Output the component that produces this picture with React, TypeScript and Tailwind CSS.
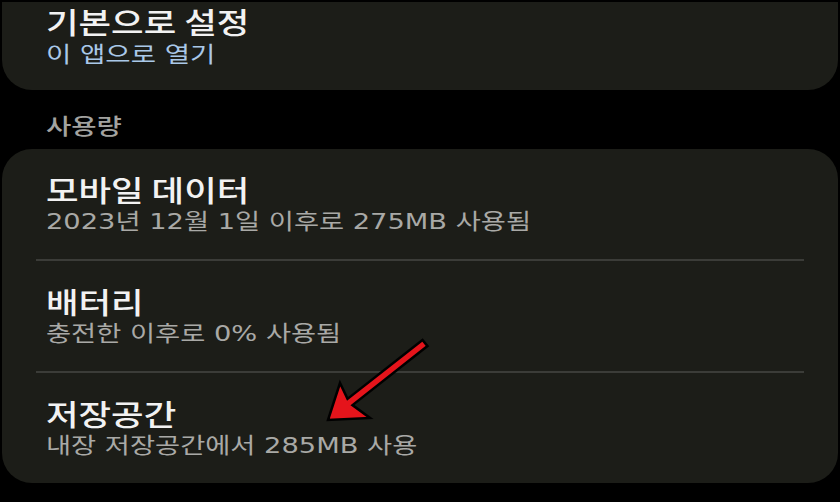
import React from "react";

const font = { fontFamily: '"Noto Sans CJK KR", "Noto Sans", sans-serif' };
const subFont = { fontFamily: '"DejaVu Sans", "Noto Sans CJK KR", sans-serif' };

function Row({ title, sub, last }: { title: string; sub: string; last?: boolean }) {
  return (
    <div className="flex flex-col">
      <div className="h-[110px] pl-[44px] pt-[23px]">
        <div className="origin-left scale-x-[1.22] text-[29px] leading-[34px] font-medium text-[#f2f2f2] whitespace-nowrap">{title}</div>
        <div className="mt-[1px] origin-left scale-x-[1.24] text-[22px] leading-[30px] text-[#a9a9a6] whitespace-nowrap" style={subFont}>
          {sub}
        </div>
      </div>
      {!last && <div className="mx-[34px] h-[2px] bg-[#3b3c38]" />}
    </div>
  );
}

export default function App() {
  return (
    <div className="relative w-[840px] h-[502px] bg-black p-[2px] flex flex-col overflow-hidden" style={font}>
      <div className="h-[88px] bg-[#1c1d18] rounded-b-[30px] pl-[44px] pt-[3px]">
        <div className="origin-left scale-x-[1.22] text-[29px] leading-[32px] font-medium text-[#f2f2f2] whitespace-nowrap">기본으로 설정</div>
        <div className="mt-[3px] origin-left scale-x-[1.25] text-[22px] leading-[30px] text-[#a9c8e8] whitespace-nowrap" style={subFont}>
          이 앱으로 열기
        </div>
      </div>
      <div className="pl-[44px] pt-[20px] h-[59px]">
        <div className="origin-left scale-x-[1.25] text-[22px] leading-[28px] font-medium text-[#a3a3a0] whitespace-nowrap">사용량</div>
      </div>
      <div className="flex-1 mb-[17px] bg-[#1c1d18] rounded-[30px] flex flex-col">
        <Row title="모바일 데이터" sub="2023년 12월 1일 이후로 275MB 사용됨" />
        <Row title="배터리" sub="충전한 이후로 0% 사용됨" />
        <Row title="저장공간" sub="내장 저장공간에서 285MB 사용" last />
      </div>
      <svg className="absolute left-0 top-0 pointer-events-none" width="840" height="502" viewBox="0 0 840 502">
        <polygon
          points="422.5,339.9 347.5,398.9 340,383 328,420 370,418 352.5,405.1 427.5,346.1"
          fill="#e5141b"
          stroke="#000"
          strokeWidth="2.5"
          strokeLinejoin="miter"
        />
      </svg>
    </div>
  );
}
